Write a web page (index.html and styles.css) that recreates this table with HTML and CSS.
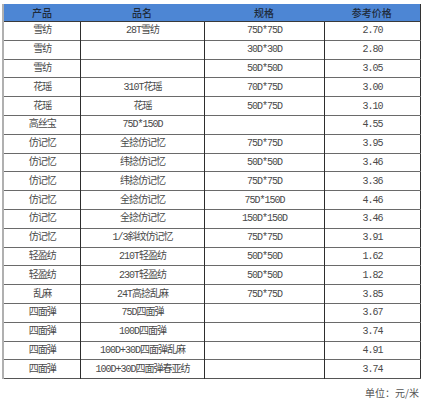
FILE: index.html
```html
<!DOCTYPE html>
<html lang="zh">
<head>
<meta charset="utf-8">
<link rel="stylesheet" href="styles.css">
</head>
<body>
<div class="wrap">
<table class="price">
<colgroup><col class="c1"><col class="c2"><col class="c3"><col class="c4"></colgroup>
<thead>
<tr><th>产品</th><th>品名</th><th>规格</th><th>参考价格</th></tr>
</thead>
<tbody>
<tr><td>雪纺</td><td>28T雪纺</td><td>75D*75D</td><td>2.70</td></tr>
<tr><td>雪纺</td><td></td><td>30D*30D</td><td>2.80</td></tr>
<tr><td>雪纺</td><td></td><td>50D*50D</td><td>3.05</td></tr>
<tr><td>花瑶</td><td>310T花瑶</td><td>70D*75D</td><td>3.00</td></tr>
<tr><td>花瑶</td><td>花瑶</td><td>50D*75D</td><td>3.10</td></tr>
<tr><td>高丝宝</td><td>75D*150D</td><td></td><td>4.55</td></tr>
<tr><td>仿记忆</td><td>全捻仿记忆</td><td>75D*75D</td><td>3.95</td></tr>
<tr><td>仿记忆</td><td>纬捻仿记忆</td><td>50D*50D</td><td>3.46</td></tr>
<tr><td>仿记忆</td><td>纬捻仿记忆</td><td>75D*75D</td><td>3.36</td></tr>
<tr><td>仿记忆</td><td>全捻仿记忆</td><td>75D*150D</td><td>4.46</td></tr>
<tr><td>仿记忆</td><td>全捻仿记忆</td><td>150D*150D</td><td>3.46</td></tr>
<tr><td>仿记忆</td><td>1/3斜纹仿记忆</td><td>75D*75D</td><td>3.91</td></tr>
<tr><td>轻盈纺</td><td>210T轻盈纺</td><td>50D*50D</td><td>1.62</td></tr>
<tr><td>轻盈纺</td><td>230T轻盈纺</td><td>50D*50D</td><td>1.82</td></tr>
<tr><td>乱麻</td><td>24T高捻乱麻</td><td>75D*75D</td><td>3.85</td></tr>
<tr><td>四面弹</td><td>75D四面弹</td><td></td><td>3.67</td></tr>
<tr><td>四面弹</td><td>100D四面弹</td><td></td><td>3.74</td></tr>
<tr><td>四面弹</td><td>100D+30D四面弹乱麻</td><td></td><td>4.91</td></tr>
<tr><td>四面弹</td><td>100D+30D四面弹春亚纺</td><td></td><td>3.74</td></tr>
</tbody>
</table>
<div class="unit">单位：元/米</div>
</div>
</body>
</html>
```
FILE: styles.css
```css
html, body {
  margin: 0;
  padding: 0;
  background: #ffffff;
}
.wrap {
  padding: 4px 7px 0 2px;
}
.price {
  width: 417px;
  border-collapse: collapse;
  table-layout: fixed;
  font-family: "Liberation Mono", "Noto Sans CJK SC", monospace;
  font-size: 10px;
  letter-spacing: -1px;
  color: #4a4a4a;
  border-left: 2px solid #b0b0b0;
  border-right: 1px solid #333;
  border-bottom: 1px solid #555;
}
.c1 { width: 77px; }
.c2 { width: 124px; }
.c3 { width: 120px; }
.c4 { width: 96px; }
.price th {
  background: #4d86d4;
  color: #1e2a3a;
  font-family: "Noto Sans CJK SC", sans-serif;
  font-weight: 500;
  font-size: 10px;
  letter-spacing: 0;
  height: 17px;
  padding: 0;
  border-bottom: 1px solid #3a3a3a;
  line-height: 17px;
}
.price td {
  height: 17.8px;
  padding: 0 0 0 1px;
  text-align: center;
  line-height: 17px;
  border-top: 1px solid #6a6a6a;
  border-left: 1px solid #2e2e2e;
}
.price td:first-child {
  border-left: none;
}
.price tbody tr:first-child td {
  border-top: none;
}
.unit {
  text-align: right;
  font-family: "Noto Sans CJK SC", sans-serif;
  font-size: 10px;
  color: #555;
  margin-top: 6px;
  padding-right: 0;
}
```
